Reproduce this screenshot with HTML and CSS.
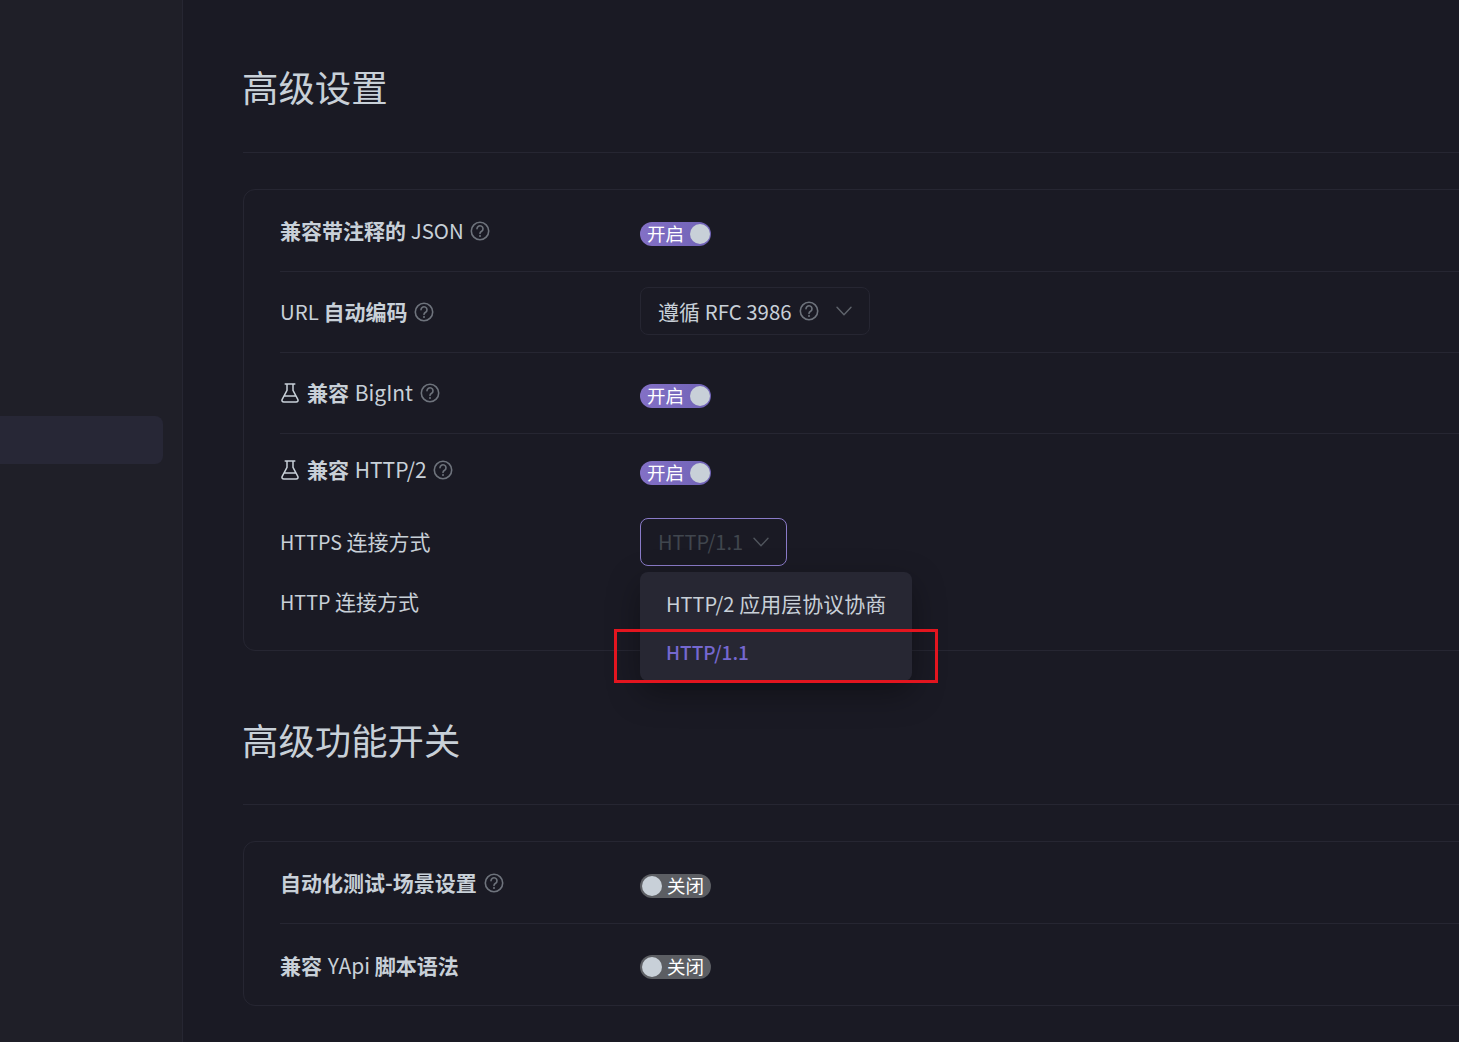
FILE: index.html
```html
<!DOCTYPE html>
<html lang="zh-CN">
<head>
<meta charset="utf-8">
<title>高级设置</title>
<link rel="stylesheet" href="styles.css">
</head>
<body>
<svg class="defs" width="0" height="0" aria-hidden="true">
  <symbol id="help" viewBox="0 0 20 20">
    <circle cx="10" cy="10" r="8.7" fill="none" stroke="currentColor" stroke-width="1.6"/>
    <path d="M7 7.8a3 3 0 1 1 4.6 2.5c-1 .6-1.6 1.1-1.6 2.2" fill="none" stroke="currentColor" stroke-width="1.6" stroke-linecap="round"/>
    <circle cx="10" cy="15" r="1" fill="currentColor"/>
  </symbol>
  <symbol id="flask" viewBox="0 0 18 20">
    <path d="M4.2 1h9.6M6 1v6.4L1.2 16.4c-.7 1.4.2 2.6 1.6 2.6h12.4c1.4 0 2.3-1.2 1.6-2.6L12 7.4V1M3.6 13h10.8" fill="none" stroke="currentColor" stroke-width="1.5" stroke-linecap="round" stroke-linejoin="round"/>
  </symbol>
  <symbol id="chev" viewBox="0 0 16 10">
    <path d="M1 1.2l7 7.6 7-7.6" fill="none" stroke="currentColor" stroke-width="1.4" stroke-linecap="round" stroke-linejoin="round"/>
  </symbol>
</svg>
<div class="app">
  <aside class="sidebar"><div class="side-item"></div></aside>
  <main class="main">
    <h2 class="section-title">高级设置</h2>
    <div class="card">
      <div class="row row-line">
        <div class="label"><b>兼容带注释的</b> <span class="en-md">JSON</span> <svg class="help"><use href="#help"/></svg></div>
        <div class="toggle on"><span class="toggle-text">开启</span><span class="knob"></span></div>
      </div>
      <div class="row row-line">
        <div class="label"><span class="en-md">URL</span> <b>自动编码</b> <svg class="help"><use href="#help"/></svg></div>
        <div class="select select-wide"><span>遵循 <span class="en-md">RFC 3986</span></span><svg class="help help-in"><use href="#help"/></svg><svg class="chev"><use href="#chev"/></svg></div>
      </div>
      <div class="row row-line">
        <div class="label"><svg class="flask"><use href="#flask"/></svg><b>兼容</b> <span class="en-lg">BigInt</span> <svg class="help"><use href="#help"/></svg></div>
        <div class="toggle on"><span class="toggle-text">开启</span><span class="knob"></span></div>
      </div>
      <div class="row row-short">
        <div class="label"><svg class="flask"><use href="#flask"/></svg><b>兼容</b> <span class="en-lg">HTTP/2</span> <svg class="help"><use href="#help"/></svg></div>
        <div class="toggle on"><span class="toggle-text">开启</span><span class="knob"></span></div>
      </div>
      <div class="row row-sub">
        <div class="label"><span class="en-sm">HTTPS</span> 连接方式</div>
        <div class="select select-focus"><span class="muted en">HTTP/1.1</span><svg class="chev chev-focus"><use href="#chev"/></svg>
          <div class="menu">
            <div class="option"><span class="en">HTTP/2</span> 应用层协议协商</div>
            <div class="option selected"><span class="en-xs">HTTP/1.1</span></div>
            <div class="annot"></div>
          </div>
        </div>
      </div>
      <div class="row row-sub">
        <div class="label"><span class="en-sm">HTTP</span> 连接方式</div>
        <div></div>
      </div>
    </div>

    <h2 class="section-title second">高级功能开关</h2>
    <div class="card card-second">
      <div class="row row-line">
        <div class="label"><b>自动化测试-场景设置</b> <svg class="help"><use href="#help"/></svg></div>
        <div class="toggle off"><span class="knob"></span><span class="toggle-text">关闭</span></div>
      </div>
      <div class="row row-last">
        <div class="label"><b>兼容</b> <span class="en-lg">YApi</span> <b>脚本语法</b></div>
        <div class="toggle off"><span class="knob"></span><span class="toggle-text">关闭</span></div>
      </div>
    </div>
  </main>
</div>
</body>
</html>
```
FILE: styles.css
```css
* { box-sizing: border-box; }
html, body { margin: 0; height: 100%; overflow: hidden; }
body {
  background: #1a1a24;
  color: #c8d0d8;
  font-family: "Noto Sans CJK SC", "Noto Sans", sans-serif;
  font-size: 21px;
}
.defs { position: absolute; }
.app { display: flex; height: 1042px; }
.sidebar {
  flex: 0 0 183px;
  background: #1f1f28;
  border-right: 1px solid #262632;
  padding: 416px 19px 0 0;
}
.side-item { height: 48px; background: #272736; border-radius: 0 8px 8px 0; }
.main { flex: 0 0 1400px; padding: 64px 0 0 60px; }
.section-title {
  margin: 0 0 36px;
  height: 89px;
  font-size: 36.4px;
  line-height: 44px;
  font-weight: 400;
  text-indent: -1px;
  border-bottom: 1px solid #262632;
}
.section-title.second { margin-top: 65px; padding-top: 1px; }
.card {
  border: 1px solid #262632;
  border-radius: 12px;
  padding: 1px 0 24px 36px;
}
.card-second { padding-bottom: 0; }
.row {
  display: grid;
  grid-template-columns: 360px 1fr;
  align-items: center;
  height: 81px;
}
.row-line { border-bottom: 1px solid #262632; }
.row-short { height: 72px; margin-bottom: 12px; }
.row-sub { height: 48px; margin-bottom: 12px; }
.row-sub:last-child { margin-bottom: 0; }
.label { white-space: nowrap; line-height: 30px; padding-bottom: 2px; }
.label b { font-weight: 700; }
.row-last .label { padding-bottom: 0; }
.en { font-size: 20px; }
.en-md { font-size: 20.4px; }
.en-lg { font-size: 21px; margin-left: 1px; }
.en-sm { font-size: 19.7px; }
.en-xs { font-size: 19px; }
.help { width: 20px; height: 20px; color: #6e737c; margin-left: 2px; vertical-align: -2px; }
.flask { width: 18px; height: 20px; color: #c8d0d8; margin: 0 8px 0 1px; vertical-align: -2px; }
.toggle {
  display: flex;
  align-items: center;
  justify-content: space-between;
  width: 71px;
  height: 24px;
  margin-top: 6px;
  border-radius: 12px;
  color: #fff;
  font-size: 18.5px;
  line-height: 24px;
}
.row-last .toggle { margin-top: 4px; }
.toggle-text { padding-bottom: 2px; height: 24px; line-height: 22px; }
.toggle.on { background: linear-gradient(90deg, #8370c6, #7063b6); padding: 0 1px 0 7px; }
.toggle.off { background: #5c5e63; padding: 0 7px 0 2px; }
.knob { width: 20px; height: 20px; border-radius: 50%; background: #c8d0d8; flex: none; }
.select {
  position: relative;
  display: inline-flex;
  align-items: center;
  justify-self: start;
  height: 48px;
  padding: 0 17px;
  border: 1px solid #262632;
  border-radius: 8px;
  background: #1a1a24;
  white-space: nowrap;
}
.select-wide { width: 230px; margin-bottom: 2px; }
.select-focus { width: 147px; border-color: #8a7bc8; }
.muted { color: #40464e; padding-bottom: 2px; }
.help-in { margin-left: 7px; flex: none; }
.chev { width: 16px; height: 10px; color: #5f646c; margin-left: 17px; flex: none; }
.chev-focus { margin-left: 10px; color: #50555d; }
.menu {
  position: absolute;
  left: -1px;
  top: 53px;
  width: 272px;
  height: 109px;
  padding: 7px 0 0;
  background: #272733;
  border-radius: 8px;
  box-shadow: 0 12px 32px rgba(0, 0, 0, .35);
  z-index: 5;
}
.option { height: 48px; line-height: 48px; padding-left: 26px; white-space: nowrap; }
.option.selected { color: #7568d0; font-weight: 500; }
.annot {
  position: absolute;
  left: -26px;
  top: 57px;
  width: 324px;
  height: 54px;
  border: 3px solid #e3151f;
}
```
